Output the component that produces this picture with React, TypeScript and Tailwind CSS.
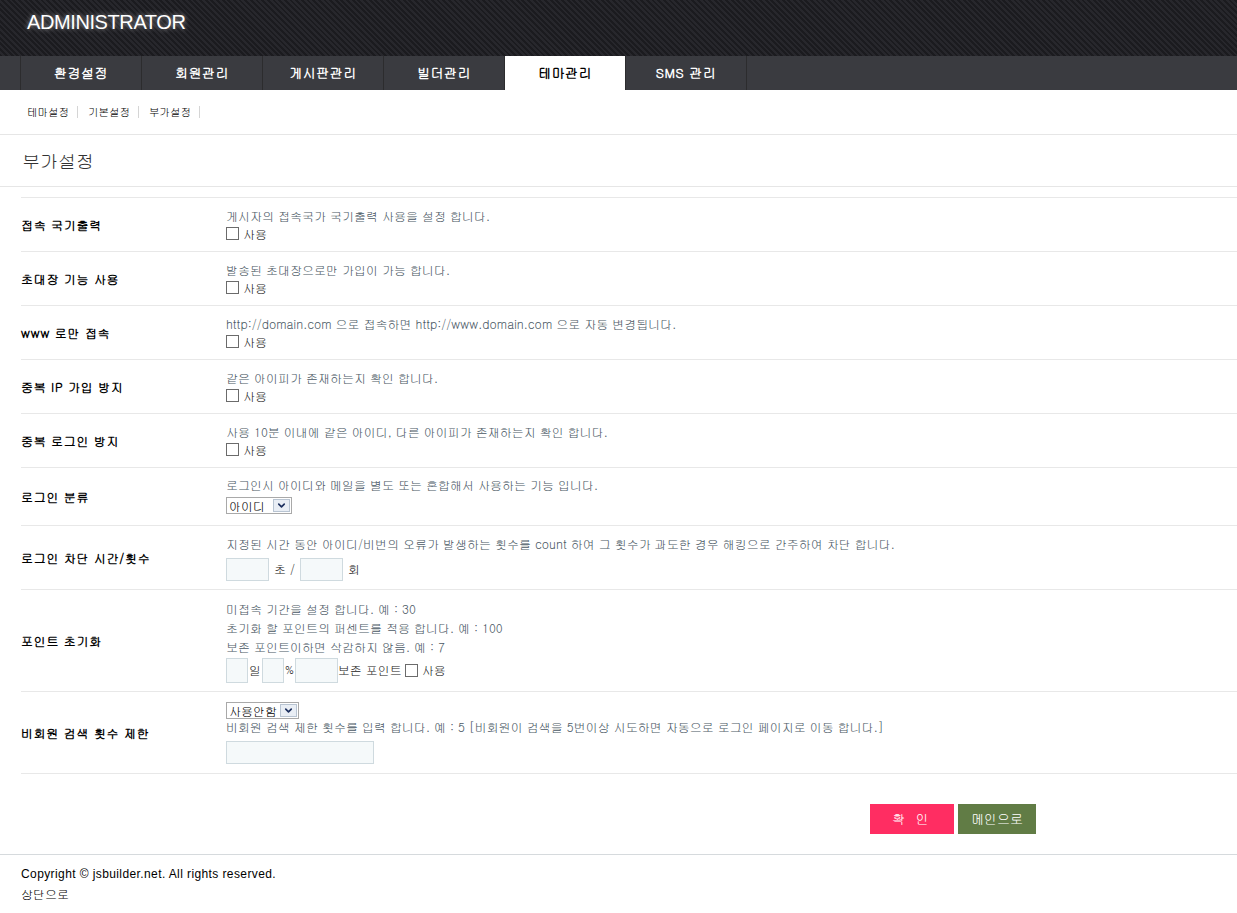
import { ChevronDown } from 'lucide-react';

const font = "font-['Gulim','Dotum','Noto_Sans_CJK_KR',sans-serif]";

function Check({ label = '사용' }: { label?: string }) {
  return (
    <span className="inline-flex items-center gap-[4px]">
      <span className="inline-block w-[13px] h-[13px] border border-[#6b6b6b] bg-white" />
      <span className="text-[12px] text-[#222]">{label}</span>
    </span>
  );
}

function FakeSelect({ value, width }: { value: string; width: string }) {
  return (
    <span className={`inline-flex items-stretch h-[17px] border border-[#a9a9a9] bg-white ${width}`}>
      <span className="flex-1 pl-[2px] text-[12px] leading-[15px] text-black">{value}</span>
      <span className="w-[17px] m-[1px] flex items-center justify-center border border-[#b8c4d2] bg-[#e9eef5]">
        <ChevronDown size={11} strokeWidth={3.5} className="text-[#1c2f5e]" />
      </span>
    </span>
  );
}

function Row({ label, children, className = '' }: { label: string; children: React.ReactNode; className?: string }) {
  return (
    <div className={`flex items-center border-b border-[#e8e8e8] ${className}`}>
      <div className="w-[205px] shrink-0 text-[12px] font-bold text-black tracking-[0.7px]">{label}</div>
      <div className="flex-1 text-[12px] text-[#4a5864]">{children}</div>
    </div>
  );
}

function Desc({ children }: { children: React.ReactNode }) {
  return <div className="leading-[18px]">{children}</div>;
}

export default function App() {
  const navs = ['환경설정', '회원관리', '게시판관리', '빌더관리', '테마관리', 'SMS 관리'];
  const simple = [
    ['접속 국기출력', '게시자의 접속국가 국기출력 사용을 설정 합니다.'],
    ['초대장 기능 사용', '발송된 초대장으로만 가입이 가능 합니다.'],
    ['www 로만 접속', 'http://domain.com 으로 접속하면 http://www.domain.com 으로 자동 변경됩니다.'],
    ['중복 IP 가입 방지', '같은 아이피가 존재하는지 확인 합니다.'],
    ['중복 로그인 방지', '사용 10분 이내에 같은 아이디, 다른 아이피가 존재하는지 확인 합니다.'],
  ];

  return (
    <div className={`min-h-[913px] bg-white ${font}`}>
      {/* 헤더 */}
      <header className="h-[56px] bg-[repeating-linear-gradient(45deg,#1b1b1f_0px,#1b1b1f_2px,#27272c_2px,#27272c_4px)] pl-[27px] pt-[7px]">
        <h1 className="font-['Liberation_Sans',Arial,sans-serif] text-[20px] text-white tracking-[-0.4px] [text-shadow:0_0_5px_rgba(255,255,255,0.55)]">
          ADMINISTRATOR
        </h1>
      </header>

      {/* 메인 메뉴 */}
      <nav className="h-[34px] bg-[#3a3b40] flex pl-[20px]">
        <div className="flex border-l border-[#2c2c2e]">
          {navs.map((n) => (
            <div
              key={n}
              className={`w-[121px] flex items-center justify-center text-[13px] font-bold tracking-[0.5px] border-r border-[#2c2c2e] ${
                n === '테마관리' ? 'bg-white text-black' : 'text-white'
              }`}
            >
              {n}
            </div>
          ))}
        </div>
      </nav>

      {/* 서브 메뉴 */}
      <div className="h-[45px] border-b border-[#e6e6e6] flex items-center pl-[27px] text-[10.5px] text-black">
        {['테마설정', '기본설정', '부가설정'].map((s) => (
          <span key={s} className="flex items-center">
            {s}
            <span className="ml-[8px] mr-[10px] w-px h-[12px] bg-[#d5d5d5]" />
          </span>
        ))}
      </div>

      {/* 타이틀 */}
      <div className="h-[52px] border-b border-[#e6e6e6] flex items-center pl-[22px]">
        <h2 className="text-[18px] text-[#333] font-normal">부가설정</h2>
      </div>

      {/* 설정 테이블 */}
      <div className="ml-[21px] mt-[10px] border-t border-[#e8e8e8]">
        {simple.map(([l, d]) => (
          <Row key={l} label={l} className="h-[54px]">
            <Desc>{d}</Desc>
            <div className="h-[18px] flex items-center">
              <Check />
            </div>
          </Row>
        ))}

        <Row label="로그인 분류" className="h-[58px]">
          <Desc>로그인시 아이디와 메일을 별도 또는 혼합해서 사용하는 기능 입니다.</Desc>
          <div className="mt-[3px] mb-[4px] flex">
            <FakeSelect value="아이디" width="w-[66px]" />
          </div>
        </Row>

        <Row label="로그인 차단 시간/횟수" className="h-[64px]">
          <Desc>지정된 시간 동안 아이디/비번의 오류가 발생하는 횟수를 count 하여 그 횟수가 과도한 경우 해킹으로 간주하여 차단 합니다.</Desc>
          <div className="mt-[5px] flex items-center text-[#222]">
            <span className="w-[43px] h-[23px] border border-[#cfdadf] bg-[#f5f9fa]" />
            <span className="mx-[5px]">초 /</span>
            <span className="w-[43px] h-[23px] border border-[#cfdadf] bg-[#f5f9fa]" />
            <span className="ml-[5px]">회</span>
          </div>
        </Row>

        <Row label="포인트 초기화" className="h-[102px]">
          <div className="leading-[19px]">미접속 기간을 설정 합니다. 예 : 30</div>
          <div className="leading-[19px]">초기화 할 포인트의 퍼센트를 적용 합니다. 예 : 100</div>
          <div className="leading-[19px]">보존 포인트이하면 삭감하지 않음. 예 : 7</div>
          <div className="mt-[2px] flex items-center text-[#222]">
            <span className="w-[22px] h-[25px] border border-[#cfdadf] bg-[#f5f9fa]" />
            <span className="mx-[1px]">일</span>
            <span className="w-[22px] h-[25px] border border-[#cfdadf] bg-[#f5f9fa]" />
            <span className="mx-[1px] text-[10px]">%</span>
            <span className="w-[43px] h-[25px] border border-[#cfdadf] bg-[#f5f9fa]" />
            <span className="mr-[3px]">보존 포인트</span>
            <Check />
          </div>
        </Row>

        <Row label="비회원 검색 횟수 제한" className="h-[82px]">
          <div className="flex">
            <FakeSelect value="사용안함" width="w-[73px]" />
          </div>
          <div className="leading-[16px]">비회원 검색 제한 횟수를 입력 합니다. 예 : 5 [비회원이 검색을 5번이상 시도하면 자동으로 로그인 페이지로 이동 합니다.]</div>
          <div className="mt-[6px] w-[148px] h-[23px] border border-[#cfdadf] bg-[#f5f9fa]" />
        </Row>
      </div>

      {/* 버튼 */}
      <div className="flex justify-end gap-[4px] pr-[201px] pt-[30px] pb-[20px]">
        <button className="w-[84px] h-[30px] bg-[#ff2d62] text-white text-[13px] tracking-[3px]">확 인</button>
        <button className="w-[78px] h-[30px] bg-[#617c45] text-white text-[13px]">메인으로</button>
      </div>

      {/* 푸터 */}
      <footer className="border-t border-[#d6dadd] pl-[21px] pt-[9px] text-[12px] text-black leading-[20px]">
        <p className="font-['Liberation_Sans',Arial,sans-serif] tracking-[0.4px]">Copyright © jsbuilder.net. All rights reserved.</p>
        <p>상단으로</p>
      </footer>
    </div>
  );
}
